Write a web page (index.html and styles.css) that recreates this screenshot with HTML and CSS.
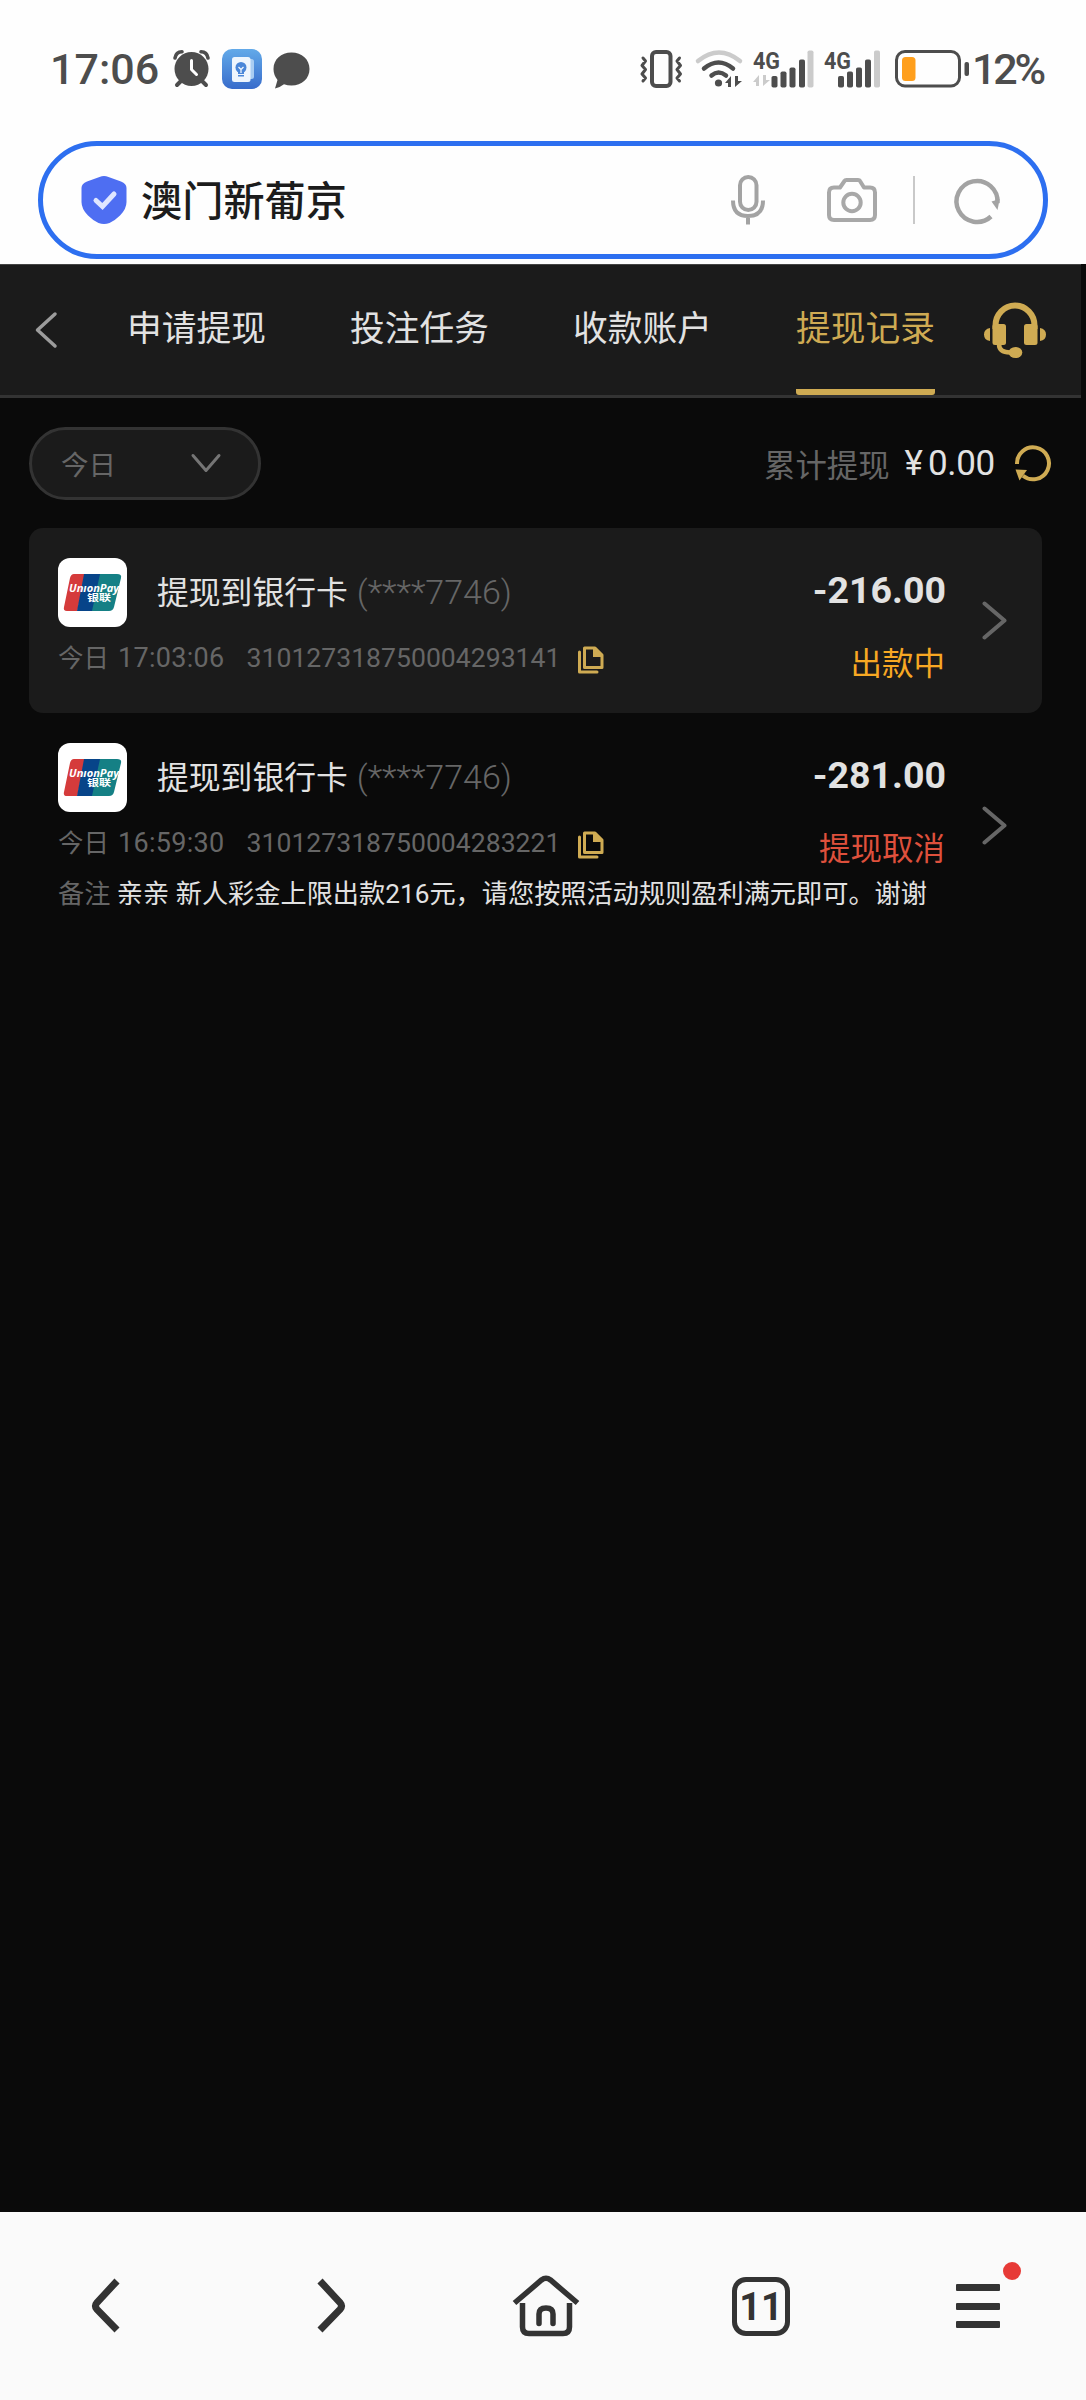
FILE: index.html
```html
<!DOCTYPE html>
<html lang="zh-CN">
<head>
<meta charset="utf-8">
<title>提现记录</title>
<link rel="stylesheet" href="styles.css">
</head>
<body>
<svg class="defs" width="0" height="0" aria-hidden="true">
  <symbol id="unionpay" viewBox="0 0 69 69">
    <defs><clipPath id="upc"><path d="M16 16H59Q64 16 63 20L56 49Q55 53 51 53H9Q5 53 6 49L12 20Q13 16 16 16Z"/></clipPath></defs>
    <g clip-path="url(#upc)">
      <path d="M0 10H28L18 60H0Z" fill="#d53b3b"/>
      <path d="M26 16H43L35 53H19Z" fill="#074489"/>
      <path d="M42 16H70V53H34Z" fill="#158085"/>
    </g>
  </symbol>
  <symbol id="copy" viewBox="0 0 26 28">
    <path d="M6.500 2H17L24 9V21.500H6.500Z" fill="none" stroke="#cfab53" stroke-width="3" stroke-linejoin="round"/>
    <path d="M15 1L25 11H15Z" fill="#cfab53"/>
    <path d="M1.500 6V26H19" fill="none" stroke="#cfab53" stroke-width="3" stroke-linejoin="round" stroke-linecap="round"/>
  </symbol>
  <symbol id="go" viewBox="0 0 25 39">
    <path d="M2.500 2.500L22.500 19.500L2.500 36.500" fill="none" stroke="#666" stroke-width="4" stroke-linecap="round" stroke-linejoin="round"/>
  </symbol>
</svg>

<div class="status">
  <span class="clock">17:06</span>
  <svg class="alarm" width="37" height="38" viewBox="0 0 37 38">
    <g stroke="#4d4d4d" fill="none" stroke-linecap="round">
      <path d="M2 8Q3 2 9 1.800" stroke-width="3.600"/><path d="M35 8Q34 2 28 1.800" stroke-width="3.600"/>
      <path d="M8 31L4 35M29 31L33 35" stroke-width="4"/>
    </g>
    <circle cx="18.500" cy="19" r="17" fill="#4d4d4d"/>
    <path d="M18.500 10.500V19.500L23.500 24.500" fill="none" stroke="#fff" stroke-width="3" stroke-linecap="round" stroke-linejoin="round"/>
  </svg>
  <svg class="app" width="40" height="40" viewBox="0 0 40 40">
    <defs><linearGradient id="ag" x1="0" y1="0" x2="0" y2="1"><stop offset="0" stop-color="#63aae9"/><stop offset="1" stop-color="#386ccb"/></linearGradient></defs>
    <rect width="40" height="40" rx="10" fill="url(#ag)"/>
    <rect x="20" y="10" width="12" height="20" rx="2.500" fill="#a9cdf2"/>
    <rect x="10" y="8" width="18.500" height="25" rx="2.500" fill="#eef5fd"/>
    <circle cx="19" cy="18.500" r="5.500" fill="#4a86d8"/><path d="M16 22H22V25H16ZM16 26H22V27.500H16Z" fill="#4a86d8"/>
    <path d="M16.500 18L19 20.500L21.500 18M19 20.500V24" stroke="#eef5fd" stroke-width="1.300" fill="none"/>
  </svg>
  <svg class="bubble" width="37" height="37" viewBox="0 0 37 37">
    <path d="M18.500 0.500C29 0.500 36.500 7.500 36.500 17S29 33.500 18.500 33.500Q14.500 33.500 11 32.300Q7 35.500 2 36.500Q3.500 31.500 4.500 28Q.5 23 .5 17C.5 7.500 8 .5 18.500 .5Z" fill="#4d4d4d"/>
  </svg>
  <span class="spacer"></span>
  <svg width="42" height="38" viewBox="0 0 42 38" fill="none" stroke="#4d4d4d">
    <rect x="12" y="2" width="18.500" height="34" rx="4" stroke-width="4"/>
    <path d="M3 8L5.500 11L2 15.500L5.500 19.500L2 24L5.500 28L3 31M39.500 8L37 11L40.500 15.500L37 19.500L40.500 24L37 28L39.500 31" stroke-width="3" stroke-linejoin="round" stroke-linecap="round"/>
  </svg>
  <svg class="wifi" width="47" height="38" viewBox="0 0 47 38" fill="none">
    <path d="M2 11Q23 -6 44 11" stroke="#cbcbcb" stroke-width="4.500" stroke-linecap="round"/>
    <path d="M8 18.500Q22.500 6.500 37 18.500" stroke="#4d4d4d" stroke-width="4.500" stroke-linecap="round"/>
    <path d="M15.500 25.500Q22.500 19.500 30 25.500" stroke="#4d4d4d" stroke-width="4.500" stroke-linecap="round"/>
    <circle cx="22.500" cy="33" r="3.600" fill="#4d4d4d"/>
    <path d="M29 33L35 26V37H32V33ZM46 31L39 37V26H42V31Z" fill="#4d4d4d"/>
  </svg>
  <svg class="signal" width="62" height="38" viewBox="0 0 62 38">
    <text x="0" y="18.500" class="net" textLength="27" lengthAdjust="spacingAndGlyphs">4G</text>
    <path d="M0 32L6 25V36H3V32ZM17 30L10 36V25H13V30Z" fill="#cbcbcb"/>
    <g fill="#4d4d4d"><rect x="18.500" y="26" width="6" height="11.500" rx="1.800"/><rect x="27.500" y="21.500" width="6" height="16" rx="1.800"/><rect x="36.500" y="17.500" width="6" height="20" rx="1.800"/><rect x="46" y="9.500" width="6" height="28" rx="1.800"/></g>
    <rect x="54.500" y="0.500" width="6" height="37" rx="1.800" fill="#cbcbcb"/>
  </svg>
  <svg class="signal2" width="58" height="38" viewBox="0 0 58 38">
    <text x="0" y="18.500" class="net" textLength="27" lengthAdjust="spacingAndGlyphs">4G</text>
    <g fill="#4d4d4d"><rect x="14" y="26" width="6" height="11.500" rx="1.800"/><rect x="23" y="21.500" width="6" height="16" rx="1.800"/><rect x="32" y="17.500" width="6" height="20" rx="1.800"/><rect x="41" y="9.500" width="6" height="28" rx="1.800"/></g>
    <rect x="50" y="0.500" width="6" height="37" rx="1.800" fill="#cbcbcb"/>
  </svg>
  <svg class="battery" width="75" height="38" viewBox="0 0 75 38">
    <rect x="1.500" y="1.500" width="63" height="34.500" rx="8.500" fill="none" stroke="#4d4d4d" stroke-width="3"/>
    <rect x="7" y="7" width="13.500" height="24" rx="3.500" fill="#ff9f1c"/>
    <rect x="69.500" y="12" width="4.500" height="14" rx="2" fill="#4d4d4d"/>
  </svg>
  <span class="percent">12%</span>
</div>

<div class="search-wrap">
  <div class="search">
    <svg class="shield" width="46" height="50" viewBox="0 0 46 50">
      <path d="M18.500 2Q23 0 27.500 2L40 6.500Q45.500 8.500 45.500 13V27Q45.500 34 39 40.500Q34 45.500 28.500 48Q23 50 17.500 48Q12 45.500 7 40.500Q.5 34 .5 27V13Q.5 8.500 6 6.500Z" fill="#4e6ef2"/>
      <path d="M15 25.500L21.500 31.500L33 19" fill="none" stroke="#dfe6ff" stroke-width="5" stroke-linecap="round"/>
    </svg>
    <span class="query">澳门新葡京</span>
    <span class="spacer"></span>
    <svg class="mic" width="34" height="50" viewBox="0 0 34 50" fill="none" stroke="#a3a3a3" stroke-width="4">
      <rect x="9" y="2" width="16.500" height="33" rx="8.250"/><path d="M2 25.500Q2 41 17 41T32 25.500M17 41V49.500"/>
    </svg>
    <svg class="camera" width="50" height="44" viewBox="0 0 50 44" fill="none" stroke="#a8a8a8" stroke-width="4" stroke-linejoin="round">
      <path d="M7 9.500H13L17.500 3Q18 2 19.500 2H31Q32.500 2 33 3L37 9.500H43Q48 9.500 48 14.500V37Q48 42 43 42H7Q2 42 2 37V14.500Q2 9.500 7 9.500Z"/><circle cx="25" cy="24.500" r="8.700"/>
    </svg>
    <span class="rule"></span>
    <svg class="reload" width="46" height="46" viewBox="0 0 46 46">
      <path d="M36 39.500A20.500 20.500 0 1 1 42.500 26" fill="none" stroke="#a3a3a3" stroke-width="4.500"/><path d="M36.500 24.500L44.700 22L42.500 33Z" fill="#a3a3a3"/>
    </svg>
  </div>
</div>

<main class="page">
  <nav class="header">
    <svg class="back" width="22" height="36" viewBox="0 0 22 36"><path d="M20 2L2.500 18L20 34" fill="none" stroke="#9c9c9c" stroke-width="3.500" stroke-linecap="round" stroke-linejoin="round"/></svg>
    <div class="tabs">
      <span class="tab">申请提现</span>
      <span class="tab">投注任务</span>
      <span class="tab">收款账户</span>
      <span class="tab on">提现记录</span>
    </div>
    <svg class="headset" width="62" height="56" viewBox="0 0 62 56">
      <path d="M11.500 26V22.500A19.500 20 0 0 1 50.500 22.500V26" fill="none" stroke="#cfab53" stroke-width="6"/>
      <path d="M15 41Q15 49.500 26 49.500" fill="none" stroke="#cfab53" stroke-width="4.500"/>
      <g fill="#cfab53"><rect x="8.500" y="21" width="13.500" height="21" rx="2.500"/><rect x="40" y="21" width="13.500" height="21" rx="2.500"/><ellipse cx="31.500" cy="49.500" rx="6.800" ry="5.500"/><path d="M6 25V38Q0 37 0 31.500T6 25ZM56 25V38Q62 37 62 31.500T56 25Z"/></g>
    </svg>
  </nav>

  <div class="filter">
    <div class="select">
      <span>今日</span>
      <svg width="30" height="20" viewBox="0 0 30 20"><path d="M2 2.500L15 17.500L28 2.500" fill="none" stroke="#757575" stroke-width="3" stroke-linecap="round" stroke-linejoin="round"/></svg>
    </div>
    <span class="total-label">累计提现</span>
    <span class="yen">¥</span><span class="total">0.00</span>
    <svg class="refresh" width="36" height="36" viewBox="0 0 36 36"><path d="M2 19A16 16 0 1 1 8 30.800" fill="none" stroke="#cfab53" stroke-width="4"/><path d="M.5 24.500L12 25L4.500 35.500Z" fill="#cfab53"/></svg>
  </div>

  <section class="record shaded">
    <div class="main">
      <div class="top">
        <div class="logo"><svg width="69" height="69"><use href="#unionpay"/><text x="11" y="34" class="up-latin" textLength="50" lengthAdjust="spacingAndGlyphs">UnıonPay</text><text x="29" y="43" class="up-cjk" textLength="24" lengthAdjust="spacingAndGlyphs">银联</text></svg></div>
        <span class="title">提现到银行卡</span><span class="card-no">(****7746)</span>
      </div>
      <div class="meta">
        <span class="day">今日</span><span class="time">17:03:06</span><span class="order">310127318750004293141</span>
        <svg class="copy" width="26" height="28"><use href="#copy"/></svg>
      </div>
    </div>
    <div class="side"><span class="amount">-216.00</span><span class="state pending">出款中</span></div>
    <svg class="go" width="25" height="39"><use href="#go"/></svg>
  </section>

  <section class="record noted">
    <div class="main">
      <div class="top">
        <div class="logo"><svg width="69" height="69"><use href="#unionpay"/><text x="11" y="34" class="up-latin" textLength="50" lengthAdjust="spacingAndGlyphs">UnıonPay</text><text x="29" y="43" class="up-cjk" textLength="24" lengthAdjust="spacingAndGlyphs">银联</text></svg></div>
        <span class="title">提现到银行卡</span><span class="card-no">(****7746)</span>
      </div>
      <div class="meta">
        <span class="day">今日</span><span class="time">16:59:30</span><span class="order">310127318750004283221</span>
        <svg class="copy" width="26" height="28"><use href="#copy"/></svg>
      </div>
      <p class="note"><span>备注</span> 亲亲 新人彩金上限出款216元，请您按照活动规则盈利满元即可。谢谢</p>
    </div>
    <div class="side"><span class="amount">-281.00</span><span class="state cancelled">提现取消</span></div>
    <svg class="go" width="25" height="39"><use href="#go"/></svg>
  </section>
</main>

<footer class="toolbar">
  <svg class="prev" width="30" height="56" viewBox="0 0 30 56"><path d="M26 3L6 24.500Q3 28 6 31.500L26 52" fill="none" stroke="#333" stroke-width="7"/></svg>
  <svg class="next" width="30" height="56" viewBox="0 0 30 56"><path d="M4 3L24 24.500Q27 28 24 31.500L4 52" fill="none" stroke="#333" stroke-width="7"/></svg>
  <svg class="home" width="68" height="62" viewBox="0 0 68 62" fill="none" stroke="#333">
    <path d="M2.500 28L29.500 5Q34 1.500 38.500 5L65.500 28" stroke-width="5.500"/>
    <path d="M10.500 28V52Q10.500 58.500 17 58.500H51Q57.500 58.500 57.500 52V28" stroke-width="5.500"/>
    <path d="M27 48.500V39Q27 33 34 33T41 39V48.500" stroke-width="5.500" stroke-linecap="round"/>
  </svg>
  <span class="count">11</span>
  <span class="menu"><i></i><i></i><i></i></span>
</footer>
</body>
</html>
```
FILE: styles.css
```css
* { box-sizing: border-box; }
body {
  margin: 0;
  width: 1086px;
  height: 2400px;
  display: flex;
  flex-direction: column;
  background: #fefefe;
  font-family: Roboto, "Noto Sans CJK SC", sans-serif;
}
svg { display: block; flex: none; overflow: visible; }
span { white-space: nowrap; }
.defs { position: absolute; }
.spacer { flex: 1; }

/* Phone status bar */
.status {
  height: 138px;
  flex: none;
  display: flex;
  align-items: center;
  padding: 0 40px 0 50px;
  color: #4d4d4d;
}
.clock { width: 123px; font-size: 43px; font-weight: 500; line-height: 50px; }
.app { margin-left: 12px; }
.bubble { margin: 2px 0 0 11px; }
.wifi { margin-left: 14px; }
.signal { margin-left: 10px; }
.signal2 { margin-left: 9px; }
.battery { margin-left: 13px; }
.net { font: 700 24.500px Roboto, sans-serif; fill: #4d4d4d; }
.percent { margin-left: 2px; width: 74px; font-size: 43px; font-weight: 500; line-height: 50px; letter-spacing: -3.200px; }

/* Address box */
.search-wrap { flex: none; height: 126px; padding: 3px 38px 5px; }
.search {
  height: 118px;
  border: 5px solid #2d6ff0;
  border-radius: 59px;
  display: flex;
  align-items: center;
  padding: 0 43px 0 38px;
}
.query { margin-left: 14px; padding-top: 3px; font-size: 41.200px; line-height: 60px; color: #1c1c1c; font-weight: 500; }
.mic { margin-right: 62px; }
.camera { margin-right: 36px; }
.rule { width: 2px; height: 48px; margin-right: 40px; background: #c9c9c9; }
.reload { margin-right: -1px; }

/* Withdrawal history */
.page { flex: none; height: 1948px; background: #0a0a0a; color: #e2e2e2; }
.header {
  width: 1081px;
  height: 134px;
  display: flex;
  align-items: flex-start;
  background: #1b1b1b;
  border-top: 1px solid #444;
  border-bottom: 3px solid #333;
}
.back { margin: 47px 0 0 35px; }
.tabs { display: flex; gap: 84px; margin-left: 70px; }
.tab { width: 139px; height: 130px; padding-top: 39px; text-align: center; font-size: 34.700px; line-height: 50px; }
.tab.on { color: #cfab53; background: linear-gradient(#cfab53, #cfab53) bottom / 100% 6px no-repeat; border-radius: 3px; }
.headset { margin: 38px 0 0 49px; }

.filter { display: flex; align-items: center; height: 130px; padding: 0 35px 0 29px; color: #666; }
.select {
  width: 232px;
  height: 73px;
  display: flex;
  align-items: center;
  justify-content: space-between;
  padding: 0 37px 0 29px;
  background: #1b1b1b;
  border: 3px solid #333;
  border-radius: 37px;
  font-size: 27.500px;
}
.total-label { margin-left: auto; font-size: 31.400px; }
.yen { margin-left: 15px; padding-top: 1px; font-size: 35px; color: #e2e2e2; }
.total { margin-left: 5px; padding-top: 1px; font-size: 35px; color: #e2e2e2; letter-spacing: -.3px; }
.refresh { margin-left: 20px; }

.record {
  display: grid;
  grid-template-columns: 1fr auto 25px;
  align-items: start;
  width: 1013px;
  height: 185px;
  margin-left: 29px;
  padding: 30px 35px 0 29px;
  border-radius: 14px;
}
.shaded { background: #1b1b1b; }
.main { min-width: 0; width: 560px; }
.top { display: flex; align-items: center; height: 69px; line-height: 69px; }
.logo { width: 69px; height: 69px; border-radius: 12px; background: #fff; }
.up-latin { font: italic 700 10.500px "Open Sans", sans-serif; fill: #fff; }
.up-cjk { font: 700 9px "Noto Sans CJK SC", sans-serif; fill: #fff; }
.title { margin-left: 30px; padding-top: 2px; font-size: 31.800px; }
.card-no { margin-left: 9px; font-size: 34px; color: #666; font-weight: 300; }
.meta { display: flex; align-items: center; height: 62px; color: #666; line-height: 62px; }
.day { font-size: 25.500px; }
.time { margin-left: 9px; font-size: 27px; letter-spacing: .3px; }
.order { margin-left: 22px; font-size: 26.600px; }
.copy { margin-left: 18px; margin-top: 3px; }
.side { display: flex; flex-direction: column; align-items: flex-end; margin-right: 36px; }
.amount { margin-top: 7px; font-size: 37.500px; font-weight: 700; line-height: 50px; }
.state { margin: 25px 1px 0 0; font-size: 31.500px; line-height: 50px; }
.pending { color: #f7a823; }
.cancelled { color: #de503c; }
.go { margin-top: 43px; }
.noted .go { margin-top: 63px; }
.note { margin: 0; font-size: 26.200px; line-height: 40px; white-space: nowrap; }
.note span { color: #666; }

/* Browser toolbar */
.toolbar {
  flex: 1;
  display: flex;
  align-items: center;
  background: #fafafa;
}
.prev { margin-left: 91px; }
.next { margin-left: 195px; }
.home { margin-left: 166px; }
.count {
  width: 58px;
  height: 59px;
  margin-left: 152px;
  border: 5.500px solid #333;
  border-radius: 14px;
  color: #333;
  font: 700 38px/50px Roboto, sans-serif;
  text-align: center;
}
.menu { position: relative; display: grid; gap: 11.500px; width: 44px; margin-left: 166px; }
.menu i { height: 7px; background: #333; border-radius: 1px; }
.menu::after {
  content: "";
  position: absolute;
  left: 47px;
  top: -22px;
  width: 18px;
  height: 18px;
  border-radius: 50%;
  background: #e73a36;
}
```
